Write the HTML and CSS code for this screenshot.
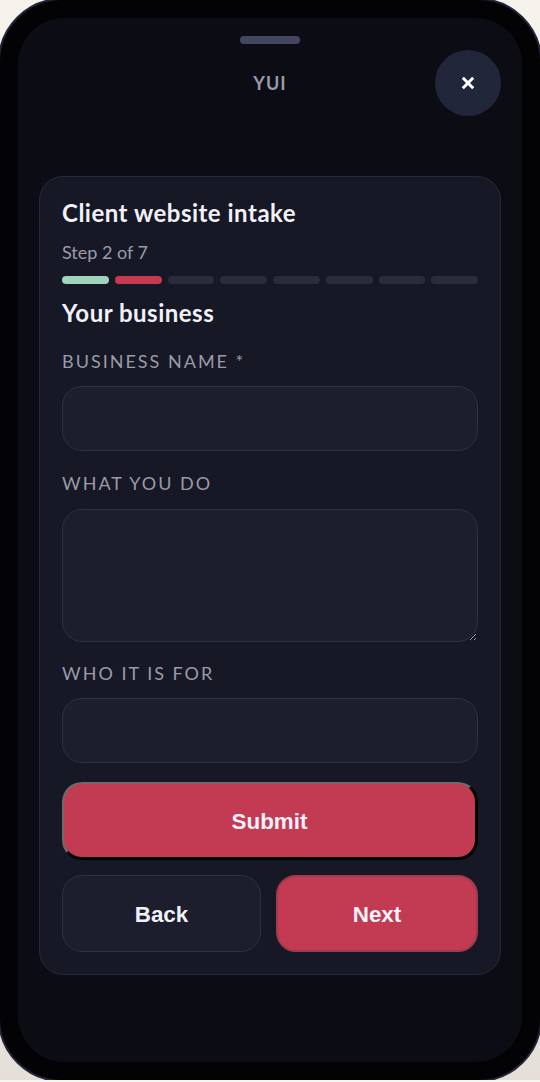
FILE: index.html
```html
<!DOCTYPE html>
<html lang="en">

<head>
  <meta charset="UTF-8">
  <meta name="viewport" content="width=device-width, initial-scale=1.0">
  <title>YUI</title>
  <link rel="stylesheet" href="styles.css">
</head>

<body>
  <div class="phone">
    <div class="screen">
      <div class="handle"></div>
      <div class="topbar">
        <span class="brand">YUI</span>
        <button class="close" aria-label="Close">
          <svg width="14" height="14" viewBox="0 0 14 14"><path d="M1.8 1.8 L12.2 12.2 M12.2 1.8 L1.8 12.2" stroke="#fff" stroke-width="3"/></svg>
        </button>
      </div>
      <form class="card">
        <h1 class="title">Client website intake</h1>
        <p class="step">Step 2 of 7</p>
        <div class="progress">
          <i class="seg done"></i>
          <i class="seg current"></i>
          <i class="seg"></i>
          <i class="seg"></i>
          <i class="seg"></i>
          <i class="seg"></i>
          <i class="seg"></i>
          <i class="seg"></i>
        </div>
        <h2 class="section">Your business</h2>
        <label class="label first">BUSINESS NAME *</label>
        <input class="field" type="text">
        <label class="label">WHAT YOU DO</label>
        <textarea class="field area"></textarea>
        <label class="label last">WHO IT IS FOR</label>
        <input class="field" type="text">
        <button class="submit" type="button">Submit</button>
        <div class="actions">
          <button class="back" type="button">Back</button>
          <button class="next" type="button">Next</button>
        </div>
      </form>
    </div>
  </div>
</body>

</html>
```

FILE: styles.css
```css
* {
  box-sizing: border-box;
}

html {
  height: 1082px;
  overflow: hidden;
  background: #f7f5f0;
}

body {
  margin: 0;
  height: 1080px;
  overflow: hidden;
  background: linear-gradient(#f6f3ec, #e4e0d9);
  font-family: "Lato", "Noto Sans", sans-serif;
}

.phone {
  width: 544px;
  height: 1084px;
  margin: -2px -2px 0;
  padding: 18px;
  background: #030305;
  border: 2px solid #25253a;
  border-radius: 64px;
}

.screen {
  height: 100%;
  padding: 18px 21px 0;
  background: #0c0d14;
  border-radius: 46px;
}

.handle {
  width: 60px;
  height: 8px;
  margin: 0 auto;
  background: #454760;
  border-radius: 4px;
}

.topbar {
  position: relative;
  height: 66px;
  margin-top: 6px;
  display: flex;
  align-items: center;
  justify-content: center;
}

.brand {
  color: #9b9aa9;
  font-size: 18px;
  font-weight: 700;
  letter-spacing: 1px;
}

.close {
  position: absolute;
  right: 0;
  top: 0;
  width: 66px;
  height: 66px;
  display: flex;
  align-items: center;
  justify-content: center;
  background: #22263a;
  border: none;
  border-radius: 50%;
}

.card {
  height: 799px;
  margin-top: 60px;
  padding: 21px 22px;
  background: #161825;
  border: 1px solid #272939;
  border-radius: 24px;
}

.title {
  margin: 0;
  color: #f2f1f9;
  font-size: 24px;
  line-height: 30px;
  font-weight: 700;
  letter-spacing: 0.5px;
}

.step {
  margin: 12px 0 0;
  color: #9b9aa9;
  font-size: 18px;
  line-height: 24px;
}

.progress {
  display: flex;
  gap: 6px;
  margin-top: 12px;
}

.seg {
  flex: 1;
  height: 8px;
  background: #2a2c3a;
  border-radius: 4px;
}

.seg.done {
  background: #9fd3bb;
}

.seg.current {
  background: #c8394f;
}

.section {
  margin: 14px 0 0;
  color: #f2f1f9;
  font-size: 24px;
  line-height: 30px;
  font-weight: 700;
  letter-spacing: 0.5px;
}

.label {
  display: block;
  margin-top: 20px;
  color: #9b9aa9;
  font-size: 18px;
  line-height: 24px;
  letter-spacing: 2px;
}

.label.first {
  margin-top: 21px;
}

.label.last {
  margin-top: 19px;
}

.field {
  display: block;
  width: 100%;
  height: 65px;
  margin-top: 13px;
  padding: 12px 16px;
  background: #1c1e2e;
  border: 1px solid #2f3142;
  border-radius: 20px;
  outline: none;
}

.area {
  height: 133px;
  margin-top: 14px;
  resize: vertical;
  color-scheme: dark;
}

.submit {
  display: block;
  width: 100%;
  height: 78px;
  margin-top: 19px;
  padding: 3px 0 0;
  color: #f2f1f9;
  background: #c23b53;
  border-style: solid;
  border-width: 2px 3px 3px 2px;
  border-color: #6b6b6b #000 #000 #6b6b6b;
  border-radius: 20px;
  font-family: "Liberation Sans", sans-serif;
  font-size: 22.4px;
  font-weight: 700;
}

.actions {
  display: flex;
  gap: 15px;
  margin-top: 15px;
}

.back,
.next {
  height: 77px;
  padding: 3px 16px 0;
  color: #f2f1f9;
  border-radius: 20px;
  font-family: "Liberation Sans", sans-serif;
  font-size: 22.4px;
  font-weight: 700;
}

.back {
  flex: 0 0 199px;
  background: #1c1e2e;
  border: 1px solid #2f3142;
}

.next {
  flex: 1;
  background: #c23b53;
  border: 2px solid #a03a50;
}
```
